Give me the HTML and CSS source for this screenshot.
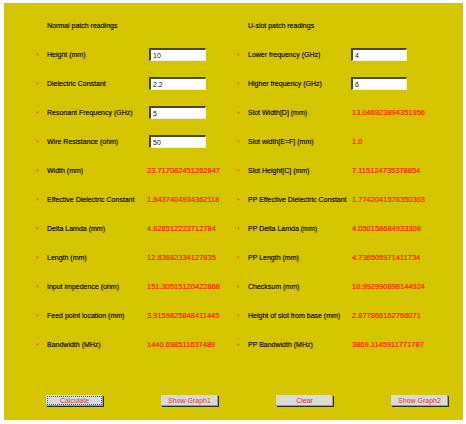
FILE: index.html
```html
<!DOCTYPE html>
<html>
<head>
<meta charset="utf-8">
<title>Patch antenna calculator</title>
<link rel="stylesheet" href="styles.css">
</head>
<body>
<div class="panel">
  <div class="columns">
    <div class="col">
      <div class="row"><span></span><span class="heading">Normal patch readings</span><span></span></div>
      <div class="row"><span class="star">*</span><span class="label">Height (mm)</span><input class="field" value="10"></div>
      <div class="row"><span class="star">*</span><span class="label">Dielectric Constant</span><input class="field" value="2.2"></div>
      <div class="row"><span class="star">*</span><span class="label">Resonant Frequency (GHz)</span><input class="field" value="5"></div>
      <div class="row"><span class="star">*</span><span class="label">Wire Resistance (ohm)</span><input class="field" value="50"></div>
      <div class="row"><span class="star">*</span><span class="label">Width (mm)</span><span class="value">23.717082451262847</span></div>
      <div class="row"><span class="star">*</span><span class="label">Effective Dielectric Constant</span><span class="value">1.8437404934362118</span></div>
      <div class="row"><span class="star">*</span><span class="label">Delta Lamda (mm)</span><span class="value">4.628512223712784</span></div>
      <div class="row"><span class="star">*</span><span class="label">Length (mm)</span><span class="value">12.83682334127835</span></div>
      <div class="row"><span class="star">*</span><span class="label">Input impedence (ohm)</span><span class="value">151.30515120422868</span></div>
      <div class="row"><span class="star">*</span><span class="label">Feed point location (mm)</span><span class="value">3.9159825848411445</span></div>
      <div class="row"><span class="star">*</span><span class="label">Bandwidth (MHz)</span><span class="value">1440.698511637489</span></div>
    </div>
    <div class="col right">
      <div class="row"><span></span><span class="heading">U-slot patch readings</span><span></span></div>
      <div class="row"><span class="star">*</span><span class="label">Lower frequency (GHz)</span><input class="field" value="4"></div>
      <div class="row"><span class="star">*</span><span class="label">Higher frequency (GHz)</span><input class="field" value="6"></div>
      <div class="row"><span class="star">*</span><span class="label">Slot Width[D] (mm)</span><span class="value">13.046923894351956</span></div>
      <div class="row"><span class="star">*</span><span class="label">Slot width[E=F] (mm)</span><span class="value">1.0</span></div>
      <div class="row"><span class="star">*</span><span class="label">Slot Height[C] (mm)</span><span class="value">7.115124735378854</span></div>
      <div class="row"><span class="star">*</span><span class="label">PP Effective Dielectric Constant</span><span class="value">1.7742041576350303</span></div>
      <div class="row"><span class="star">*</span><span class="label">PP Delta Lamda (mm)</span><span class="value">4.050158684933308</span></div>
      <div class="row"><span class="star">*</span><span class="label">PP Length (mm)</span><span class="value">4.736505971411734</span></div>
      <div class="row"><span class="star">*</span><span class="label">Checksum (mm)</span><span class="value">10.992990898144924</span></div>
      <div class="row"><span class="star">*</span><span class="label">Height of slot from base (mm)</span><span class="value">2.877866162768071</span></div>
      <div class="row"><span class="star">*</span><span class="label">PP Bandwidth (MHz)</span><span class="value">3869.1145911771787</span></div>
    </div>
  </div>
  <div class="buttons">
    <button class="btn focused">Calculate</button>
    <button class="btn">Show Graph1</button>
    <button class="btn">Clear</button>
    <button class="btn">Show Graph2</button>
  </div>
</div>
</body>
</html>
```
FILE: styles.css
```css
html, body {
  margin: 0;
  padding: 0;
  background: #ffffff;
}

body {
  width: 466px;
  height: 424px;
  overflow: hidden;
  font-family: "Liberation Sans", Arial, sans-serif;
  font-size: 7px;
  color: #0e0c00;
}

.panel {
  margin: 3px 0 0 4px;
  width: 459px;
  height: 417px;
  background: #d5c400;
  box-sizing: border-box;
  padding: 8px 0 0 32px;
  display: flex;
  flex-direction: column;
}

.columns {
  display: grid;
  grid-template-columns: 201px 210px;
}

.col {
  display: flex;
  flex-direction: column;
}

.row {
  height: 29px;
  display: grid;
  grid-template-columns: 11px 102px 1fr;
  align-items: center;
  white-space: nowrap;
}

.right .row {
  grid-template-columns: 11px 103px 1fr;
}

.star {
  color: #ec4a10;
  font-size: 7px;
  line-height: 1;
  padding-top: 2px;
}

.heading,
.label {
  font-size: 7px;
  text-shadow: 0 0 0.15px rgba(14, 12, 0, 0.6);
}

.value {
  color: #ff2200;
  font-size: 7.5px;
  margin-left: -2px;
  text-shadow: 0 0 0.2px rgba(255, 34, 0, 0.7);
}

.right .value {
  margin-left: 1px;
}

.field {
  width: 57px;
  height: 13px;
  box-sizing: border-box;
  margin: 0;
  padding: 0 0 0 2px;
  background: #ffffff;
  border-style: solid;
  border-width: 2px 1px 1px 2px;
  border-color: #4a4630 #f4f0d0 #f4f0d0 #4a4630;
  font-family: "Liberation Sans", Arial, sans-serif;
  font-size: 7px;
  color: #141200;
  outline: none;
}

.right .field {
  width: 56px;
}

.buttons {
  margin-top: 36px;
  display: flex;
  padding-left: 10px;
  gap: 58px;
}

.btn {
  width: 57px;
  height: 11px;
  margin: 0;
  padding: 0;
  background: #dadada;
  border: none;
  box-shadow: 1px 1px 0 #2e2e20, inset -1px -1px 0 #9a9a90;
  font-family: "Liberation Sans", Arial, sans-serif;
  font-size: 7px;
  line-height: 11px;
  color: #e4303a;
}

.btn.focused {
  outline: 1px dotted #3a6a6a;
  outline-offset: -2px;
}
```
